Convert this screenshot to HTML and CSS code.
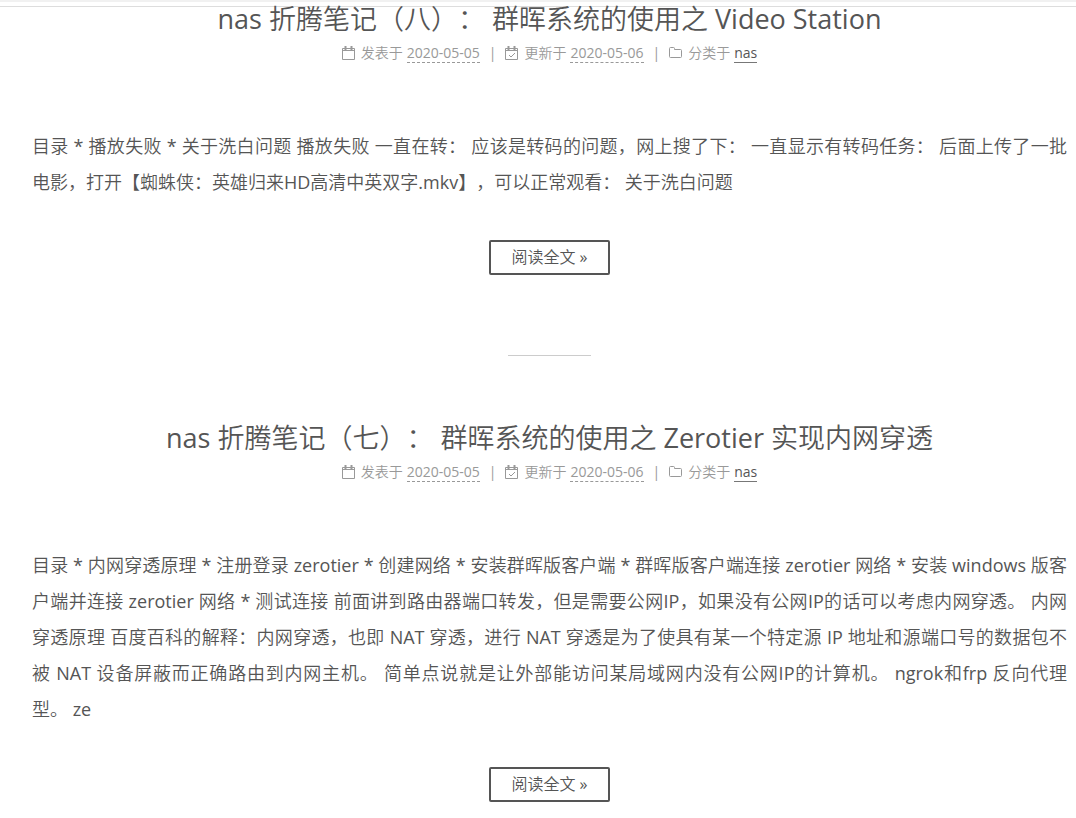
FILE: index.html
```
<!DOCTYPE html>
<html lang="zh-CN">
<head>
    <meta charset="UTF-8">
    <meta name="viewport" content="width=device-width, initial-scale=1.0">
    <title>nas 折腾笔记</title>
    <link rel="stylesheet" href="styles.css">
</head>
<body>
    <header class="header"></header>
    <main class="posts">
        <article class="post">
            <h2 class="post-title"><a href="#">nas 折腾笔记（八）： 群晖系统的使用之 Video Station</a></h2>
            <div class="post-meta">
                <span class="meta-item">
                    <svg class="icon" viewBox="0 0 14 14"><path d="M.5 2.500h12v11H.5zM.5 4.500h12"/><path class="ring" d="M3.500 0v4M9.500 0v4"/></svg>
                    <span>发表于</span>
                    <time datetime="2020-05-05">2020-05-05</time>
                </span>
                <span class="divider">|</span>
                <span class="meta-item">
                    <svg class="icon" viewBox="0 0 14 14"><path d="M.5 2.500h12v11H.5zM.5 4.500h12M4 9l2 2 4-4"/><path class="ring" d="M3.500 0v4M9.500 0v4"/></svg>
                    <span>更新于</span>
                    <time datetime="2020-05-06">2020-05-06</time>
                </span>
                <span class="divider">|</span>
                <span class="meta-item">
                    <svg class="icon" viewBox="0 0 14 14"><path d="M1.500 1.500h3q1 0 1 1v1h6q1 0 1 1v6q0 1-1 1h-10q-1 0-1-1v-8q0-1 1-1z"/></svg>
                    <span>分类于</span>
                    <a href="#">nas</a>
                </span>
            </div>
            <p class="post-body">目录 * 播放失败 * 关于洗白问题 播放失败 一直在转： 应该是转码的问题，网上搜了下： 一直显示有转码任务： 后面上传了一批<span class="keep">电影，</span>打开【蜘蛛侠：英雄归来HD高清中英双字.mkv】，可以正常观看： 关于洗白问题</p>
            <a class="btn" href="#">阅读全文 »</a>
        </article>

        <hr class="post-eof">

        <article class="post">
            <h2 class="post-title"><a href="#">nas 折腾笔记（七）： 群晖系统的使用之 Zerotier 实现内网穿透</a></h2>
            <div class="post-meta">
                <span class="meta-item">
                    <svg class="icon" viewBox="0 0 14 14"><path d="M.5 2.500h12v11H.5zM.5 4.500h12"/><path class="ring" d="M3.500 0v4M9.500 0v4"/></svg>
                    <span>发表于</span>
                    <time datetime="2020-05-05">2020-05-05</time>
                </span>
                <span class="divider">|</span>
                <span class="meta-item">
                    <svg class="icon" viewBox="0 0 14 14"><path d="M.5 2.500h12v11H.5zM.5 4.500h12M4 9l2 2 4-4"/><path class="ring" d="M3.500 0v4M9.500 0v4"/></svg>
                    <span>更新于</span>
                    <time datetime="2020-05-06">2020-05-06</time>
                </span>
                <span class="divider">|</span>
                <span class="meta-item">
                    <svg class="icon" viewBox="0 0 14 14"><path d="M1.500 1.500h3q1 0 1 1v1h6q1 0 1 1v6q0 1-1 1h-10q-1 0-1-1v-8q0-1 1-1z"/></svg>
                    <span>分类于</span>
                    <a href="#">nas</a>
                </span>
            </div>
            <p class="post-body">目录 * 内网穿透原理 * 注册登录 zerotier * 创建网络 * 安装群晖版客户端 * 群晖版客户端连接 zerotier 网络 * 安装 windows 版客户端并连接 zerotier 网络 * 测试连接 前面讲到路由器端口转发，但是需要公网IP，如果没有公网IP的话可以考虑内网穿透。 内网<span class="keep">穿透原理</span> 百度百科的解释：内网穿透，也即 NAT 穿透，进行 NAT 穿透是为了使具有某一个特定源 IP 地址和源端口号的数据包不<span class="keep">被 NAT</span> 设备屏蔽而正确路由到内网主机。 简单点说就是让外部能访问某局域网内没有公网IP的计算机。 ngrok和frp 反向代理<span class="keep">型。 ze</span></p>
            <a class="btn" href="#">阅读全文 »</a>
        </article>
    </main>
</body>
</html>
```
FILE: styles.css
```
body {
    margin: 0;
    background: #fff;
    color: #555;
    font-family: "Open Sans", "Noto Sans CJK SC DemiLight", "Noto Sans CJK SC", sans-serif;
    text-spacing-trim: space-all;
}
a {
    color: #555;
    text-decoration: none;
}
.header {
    height: 4px;
    border-top: 2px solid #f1f1f1;
    border-bottom: 1px solid #ddd;
}
.posts {
    padding: 0 9px 16px 32px;
}
.post {
    display: flex;
    flex-direction: column;
    align-items: center;
}
.post-title {
    margin: 0;
    font-size: 27px;
    font-weight: 400;
    line-height: 24px;
    text-align: center;
}
.post-meta {
    display: flex;
    flex-wrap: wrap;
    justify-content: center;
    margin-top: 12px;
    color: #999;
    font-size: 14px;
    line-height: 20px;
}
.meta-item {
    display: flex;
    align-items: center;
    gap: 4px;
}
.meta-item time, .meta-item a {
    box-sizing: border-box;
    height: 20px;
    border-bottom: 1px dashed #999;
}
.meta-item a {
    border-bottom: 1px solid #777;
}
.divider {
    margin: 0 9px;
}
.icon {
    width: 14px;
    height: 14px;
    margin-right: 1px;
    fill: none;
    stroke: #999;
}
.icon .ring {
    stroke-width: 2;
}
.post-body {
    width: 100%;
    margin: 65px 0 40px;
    font-size: 18px;
    line-height: 36px;
    text-align: justify;
}
.keep {
    white-space: nowrap;
}
.btn {
    padding: 0 20px;
    border: 2px solid #555;
    border-radius: 2px;
    font-size: 16px;
    line-height: 31px;
}
.post-eof {
    width: 8%;
    height: 1px;
    margin: 80px auto 70px;
    border: 0;
    background: #ccc;
}
```
